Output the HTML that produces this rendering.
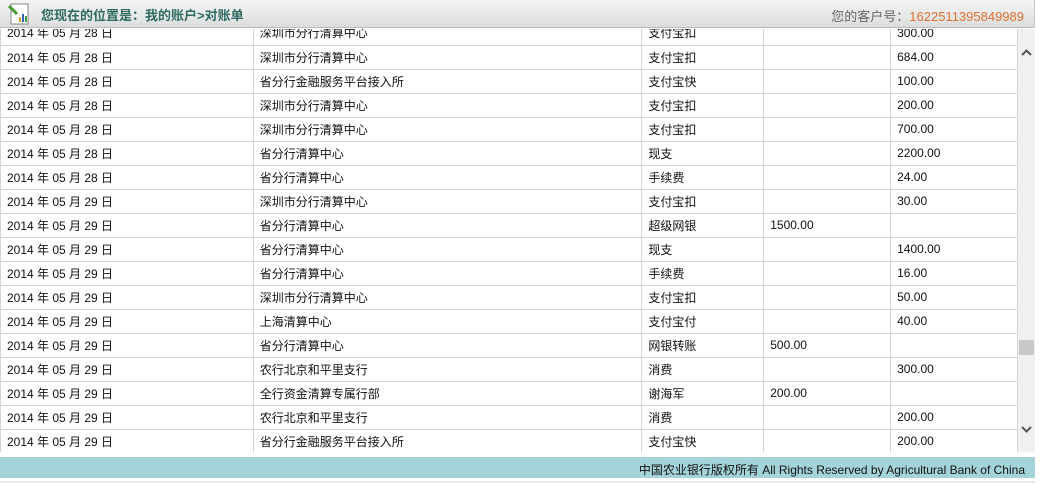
<!DOCTYPE html><html><head><meta charset="utf-8"><style>
*{margin:0;padding:0;box-sizing:border-box}
body{width:1043px;height:484px;background:#fff;font-family:"Liberation Sans","Noto Sans CJK SC",sans-serif;position:relative;overflow:hidden}
#hd{position:absolute;left:0;top:0;width:1035px;height:28px;background:linear-gradient(#f4f5f5,#dcdede);border-bottom:1px solid #b8bcbc;border-right:1px solid #c8c8c8}
#hd .t{position:absolute;left:41px;top:5px;font-size:13px;font-weight:bold;color:#2f6a62}
#hd .c{position:absolute;right:10px;top:6px;font-size:13px;color:#666}
#hd .c span{color:#e07030}
#wrap{position:absolute;left:0;top:29px;width:1018px;height:423px;overflow:hidden}
table{position:absolute;top:-8px;left:0;border-collapse:collapse;font-size:12px;color:#111}
td{height:24px;border:1px solid #d4d4d4;padding:0 0 0 6px;white-space:nowrap;border-top:none}
tr td{border-bottom:1px solid #d4d4d4}
#sb{position:absolute;left:1018px;top:29px;width:17px;height:423px;background:#f0f0f0}
#th{position:absolute;left:1019px;top:340px;width:15px;height:15px;background:#c8c8c8}
#ft{position:absolute;left:0;top:457px;width:1035px;height:21px;background:#a4d3d9;font-size:12px;color:#111;text-align:right;padding:4px 10px 0 0}
#ln{position:absolute;left:0;top:481px;width:1035px;height:2px;background:#e4e8e8}
</style></head><body>
<div id="hd">
<svg style="position:absolute;left:7px;top:2px" width="24" height="24" viewBox="0 0 24 24"><rect x="4" y="2" width="17" height="20" fill="#fff" stroke="#888"/><path d="M2 4l8 8" stroke="#4a9a3a" stroke-width="3"/><rect x="12" y="15" width="2" height="5" fill="#e0a020"/><rect x="15" y="12" width="2" height="8" fill="#3060c0"/><rect x="18" y="14" width="2" height="6" fill="#40a040"/></svg>
<div class="t">您现在的位置是：我的账户&gt;对账单</div>
<div class="c">您的客户号：<span>1622511395849989</span></div>
</div>
<div id="wrap"><table>
<colgroup><col style="width:253px"><col style="width:389px"><col style="width:122px"><col style="width:127px"><col style="width:127px"></colgroup>
<tr><td>2014 年 05 月 28 日</td><td>深圳市分行清算中心</td><td>支付宝扣</td><td></td><td>300.00</td></tr>
<tr><td>2014 年 05 月 28 日</td><td>深圳市分行清算中心</td><td>支付宝扣</td><td></td><td>684.00</td></tr>
<tr><td>2014 年 05 月 28 日</td><td>省分行金融服务平台接入所</td><td>支付宝快</td><td></td><td>100.00</td></tr>
<tr><td>2014 年 05 月 28 日</td><td>深圳市分行清算中心</td><td>支付宝扣</td><td></td><td>200.00</td></tr>
<tr><td>2014 年 05 月 28 日</td><td>深圳市分行清算中心</td><td>支付宝扣</td><td></td><td>700.00</td></tr>
<tr><td>2014 年 05 月 28 日</td><td>省分行清算中心</td><td>现支</td><td></td><td>2200.00</td></tr>
<tr><td>2014 年 05 月 28 日</td><td>省分行清算中心</td><td>手续费</td><td></td><td>24.00</td></tr>
<tr><td>2014 年 05 月 29 日</td><td>深圳市分行清算中心</td><td>支付宝扣</td><td></td><td>30.00</td></tr>
<tr><td>2014 年 05 月 29 日</td><td>省分行清算中心</td><td>超级网银</td><td>1500.00</td><td></td></tr>
<tr><td>2014 年 05 月 29 日</td><td>省分行清算中心</td><td>现支</td><td></td><td>1400.00</td></tr>
<tr><td>2014 年 05 月 29 日</td><td>省分行清算中心</td><td>手续费</td><td></td><td>16.00</td></tr>
<tr><td>2014 年 05 月 29 日</td><td>深圳市分行清算中心</td><td>支付宝扣</td><td></td><td>50.00</td></tr>
<tr><td>2014 年 05 月 29 日</td><td>上海清算中心</td><td>支付宝付</td><td></td><td>40.00</td></tr>
<tr><td>2014 年 05 月 29 日</td><td>省分行清算中心</td><td>网银转账</td><td>500.00</td><td></td></tr>
<tr><td>2014 年 05 月 29 日</td><td>农行北京和平里支行</td><td>消费</td><td></td><td>300.00</td></tr>
<tr><td>2014 年 05 月 29 日</td><td>全行资金清算专属行部</td><td>谢海军</td><td>200.00</td><td></td></tr>
<tr><td>2014 年 05 月 29 日</td><td>农行北京和平里支行</td><td>消费</td><td></td><td>200.00</td></tr>
<tr><td>2014 年 05 月 29 日</td><td>省分行金融服务平台接入所</td><td>支付宝快</td><td></td><td>200.00</td></tr>
</table></div>
<div id="sb"></div><div id="th"></div>
<svg style="position:absolute;left:1020px;top:48px" width="13" height="10"><path d="M2 7l4.5-4.5L11 7" fill="none" stroke="#555" stroke-width="2"/></svg>
<svg style="position:absolute;left:1020px;top:424px" width="13" height="10"><path d="M2 3l4.5 4.5L11 3" fill="none" stroke="#555" stroke-width="2"/></svg>
<div id="ft">中国农业银行版权所有 All Rights Reserved by Agricultural Bank of China</div>
<div id="ln"></div>
</body></html>
